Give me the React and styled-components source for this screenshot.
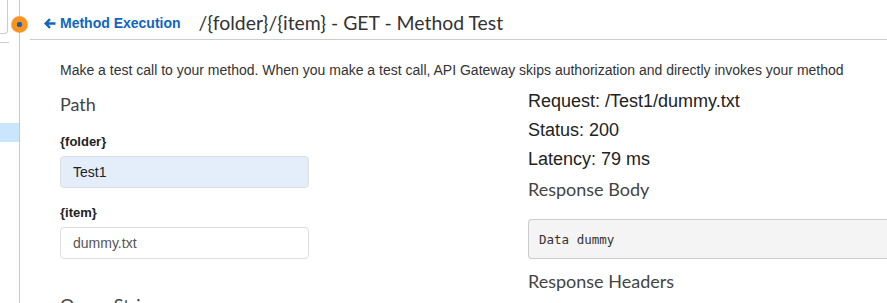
import React from 'react'
import styled, { createGlobalStyle } from 'styled-components'

const GlobalStyle = createGlobalStyle`
  html, body {
    margin: 0;
    padding: 0;
    height: 303px;
    background: #fff;
    overflow: hidden;
  }
  body {
    font-family: 'Liberation Sans', Arial, sans-serif;
    color: #333;
  }
`

const Page = styled.div`
  display: flex;
  width: 887px;
  height: 303px;
  overflow: hidden;
`

const Rail = styled.div`
  position: relative;
  flex: 0 0 19px;
  border-right: 1px solid #c8c8c8;
  display: flex;
  flex-direction: column;
`

const RailButton = styled.div`
  width: 8px;
  height: 34px;
  box-sizing: border-box;
  border: 1px solid #ccc;
  border-left: none;
  border-top: none;
  border-radius: 0 0 4px 0;
`

const RailDivider = styled.div`
  width: 9px;
  height: 1px;
  margin-top: 8px;
  background: #ccc;
`

const RailItem = styled.div`
  margin-top: 80px;
  height: 19px;
  background: ${p => (p.$active ? '#c9e6fd' : 'transparent')};
`

// step marker sitting over the rail line
const StepDot = styled.div`
  position: absolute;
  top: 16px;
  left: 11px;
  width: 17px;
  height: 17px;
  border-radius: 50%;
  background: radial-gradient(circle closest-side, #1a5fb4 0 2.3px, #f7931e 3px 7.2px, #fbb060 8.5px);
  z-index: 2;
`

const Main = styled.div`
  flex: 1;
  padding-left: 10px;
  display: flex;
  flex-direction: column;
  min-height: 0;
`

const Header = styled.div`
  flex: 0 0 40px;
  box-sizing: border-box;
  border-bottom: 1px solid #ccc;
  display: flex;
  align-items: center;
  padding: 7px 0 0 14px;
`

const BackLink = styled.a`
  display: flex;
  align-items: center;
  gap: 4px;
  color: #1166bb;
  font-weight: bold;
  font-size: 14px;
  text-decoration: none;
  margin-right: 18px;
`

const Title = styled.h1`
  margin: 0;
  font-family: Lato, 'Liberation Sans', sans-serif;
  font-weight: 400;
  font-size: 19.4px;
  line-height: 24px;
  color: #333;
`

const Body = styled.div`
  padding: 22px 0 0 30px;
`

const Intro = styled.p`
  margin: 0;
  font-size: 14px;
  line-height: 17px;
  color: #333;
`

const Columns = styled.div`
  display: grid;
  grid-template-columns: 468px 1fr;
`

const Column = styled.div`
  display: flex;
  flex-direction: column;
`

const SectionTitle = styled.h2`
  margin: 0;
  font-family: Lato, 'Liberation Sans', sans-serif;
  font-weight: 400;
  font-size: 18px;
  line-height: 24px;
  color: #444;
`

const FieldLabel = styled.label`
  font-weight: bold;
  font-size: 13px;
  line-height: 15px;
  color: #222;
  margin-bottom: 7px;
`

const Input = styled.input`
  width: 249px;
  height: 32px;
  box-sizing: border-box;
  border: 1px solid #dedede;
  border-radius: 4px;
  padding: 0 12px;
  font-family: 'Liberation Sans', Arial, sans-serif;
  font-size: 14px;
  color: ${p => (p.$filled ? '#222' : '#555')};
  background: ${p => (p.$filled ? '#e4eefb' : '#fff')};
  outline: none;
`

const ResultLine = styled.div`
  font-size: 18px;
  line-height: 29px;
  color: #222;
`

const ResponseBox = styled.pre`
  margin: 0;
  height: 40px;
  box-sizing: border-box;
  border: 1px solid #ccc;
  border-right: none;
  border-radius: 4px 0 0 4px;
  background: #f4f4f4;
  padding: 0 10px;
  display: flex;
  align-items: center;
  font-family: 'DejaVu Sans Mono', 'Liberation Mono', monospace;
  font-size: 12.5px;
  color: #333;
`

export default function App() {
  return (
    <>
      <GlobalStyle />
      <Page>
        <Rail>
          <RailButton />
          <RailDivider />
          <RailItem $active />
          <StepDot />
        </Rail>
        <Main>
          <Header>
            <BackLink href="#">
              <svg width="12" height="11" viewBox="0 0 12 11">
                <path d="M6 1.2 1.7 5.5 6 9.8M2 5.5h9.5" fill="none" stroke="#1166bb" strokeWidth="2.4" />
              </svg>
              Method Execution
            </BackLink>
            <Title>/{'{folder}'}/{'{item}'} - GET - Method Test</Title>
          </Header>
          <Body>
            <Intro>
              Make a test call to your method. When you make a test call, API Gateway skips authorization and directly invokes your method
            </Intro>
            <Columns>
              <Column>
                <SectionTitle style={{ marginTop: 13 }}>Path</SectionTitle>
                <FieldLabel style={{ marginTop: 18 }}>{'{folder}'}</FieldLabel>
                <Input $filled defaultValue="Test1" />
                <FieldLabel style={{ marginTop: 17 }}>{'{item}'}</FieldLabel>
                <Input defaultValue="dummy.txt" />
                <SectionTitle style={{ marginTop: 34 }}>Query Strings</SectionTitle>
              </Column>
              <Column>
                <ResultLine style={{ marginTop: 8 }}>Request: /Test1/dummy.txt</ResultLine>
                <ResultLine>Status: 200</ResultLine>
                <ResultLine>Latency: 79 ms</ResultLine>
                <SectionTitle style={{ marginTop: 3 }}>Response Body</SectionTitle>
                <ResponseBox style={{ marginTop: 18 }}>Data dummy</ResponseBox>
                <SectionTitle style={{ marginTop: 10 }}>Response Headers</SectionTitle>
              </Column>
            </Columns>
          </Body>
        </Main>
      </Page>
    </>
  )
}
